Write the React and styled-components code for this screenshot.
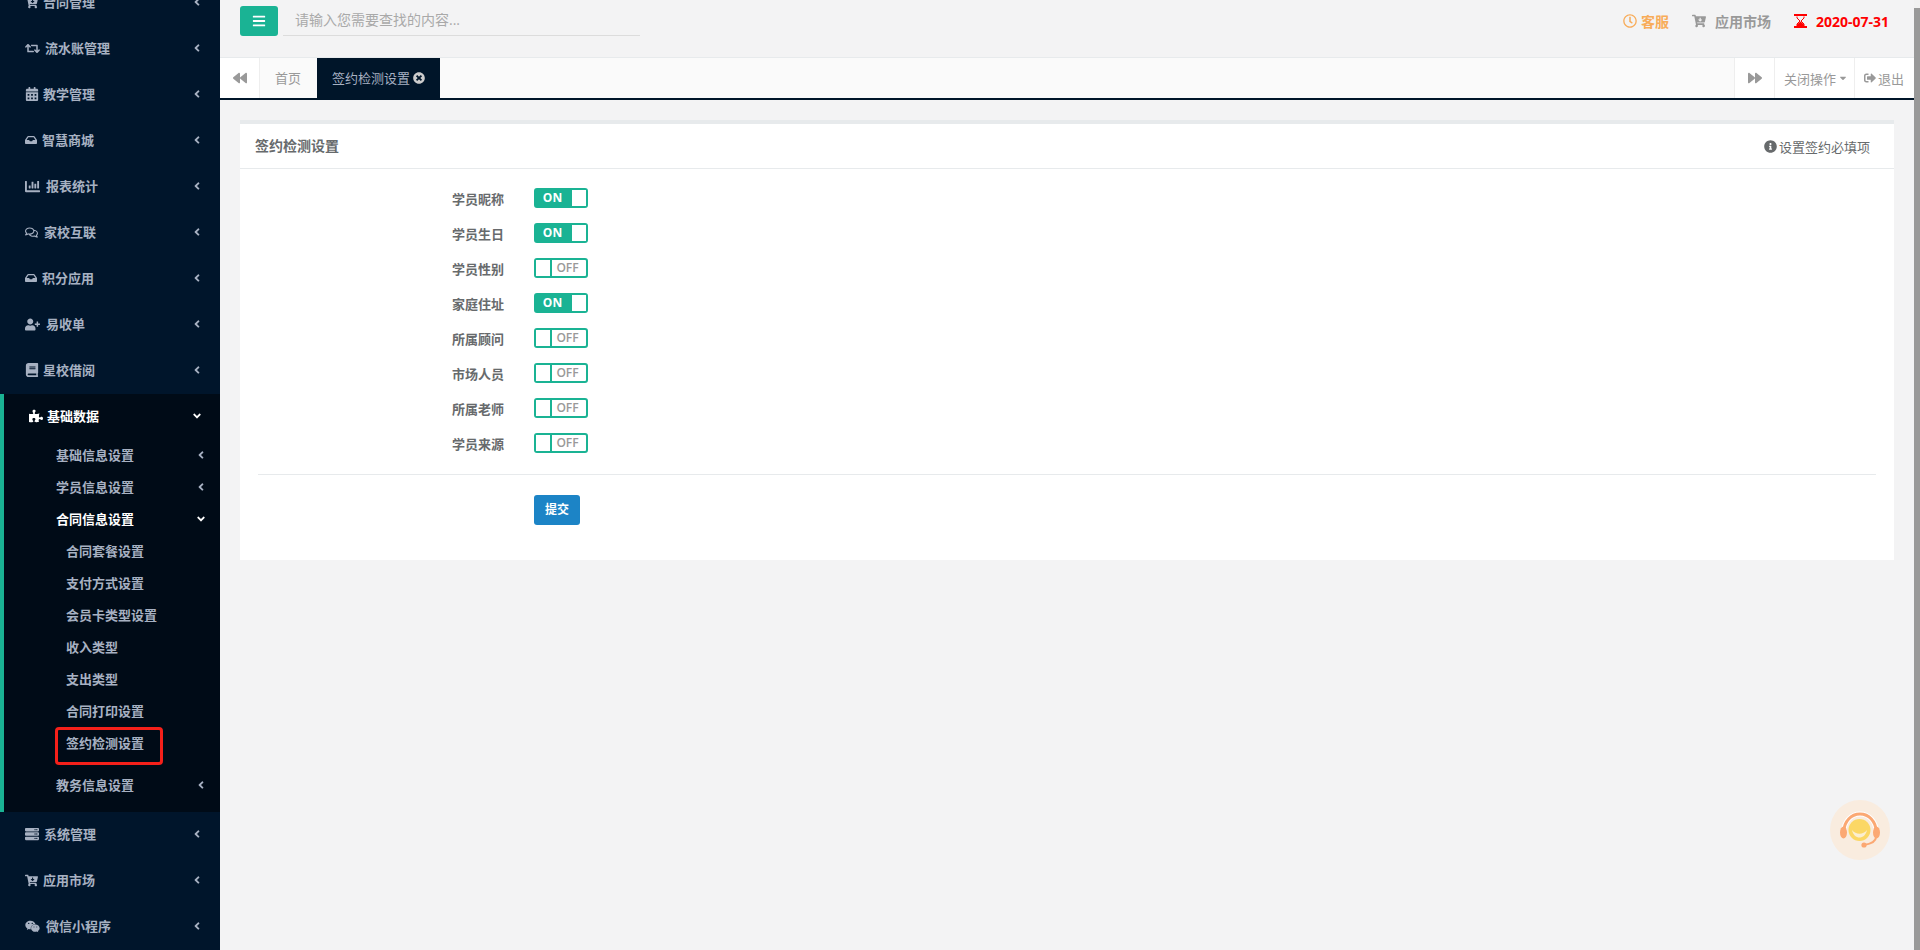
import React from 'react';
import styled, { createGlobalStyle } from 'styled-components';
import {
  FaAngleLeft, FaAngleDown, FaBars, FaBackward, FaForward, FaBook, FaCalendarAlt, FaChartBar, FaInbox,
  FaInfoCircle, FaPuzzlePiece, FaRegClock, FaRegComments, FaRetweet, FaServer, FaCartArrowDown,
  FaSignOutAlt, FaTimesCircle, FaUserPlus, FaWeixin, FaCaretDown,
} from 'react-icons/fa';

const FONT = `"Open Sans", "Noto Sans CJK SC", "Noto Sans", sans-serif`;

const Global = createGlobalStyle`
  html, body { margin: 0; padding: 0; height: 100%; overflow: hidden; background: #f3f3f4; }
  body { font-family: ${FONT}; font-size: 13px; color: #676a6c; }
  * { box-sizing: border-box; }
`;

const Page = styled.div`display: flex; width: 1920px; height: 950px; overflow: hidden;`;
const Sidebar = styled.nav`width: 220px; flex: none; height: 950px; overflow: hidden; background: #00152b;`;
const SideList = styled.div`margin-top: -20px; display: flex; flex-direction: column;`;

const TopItem = styled.div`
  height: 46px; display: flex; align-items: center; padding: 0 19px 2px 25px;
  color: ${p => (p.$active ? '#fff' : '#a7b1c2')}; font-weight: 700; line-height: 18px;
`;
const ItemIcon = styled.span`
  width: ${p => p.$w}px; flex: none; display: flex; align-items: center; font-size: ${p => p.$size}px;
`;
const ItemText = styled.span`flex: 1; white-space: nowrap;`;
const Chevron = styled.span`display: flex; font-size: 12px; width: 8px; justify-content: flex-end; color: inherit;`;

const ActiveGroup = styled.div`
  background: #000b17; border-left: 4px solid #1ab394; padding-bottom: 10px;
  display: flex; flex-direction: column;
`;
const SubItem = styled.div`
  height: 32px; display: flex; align-items: center; padding: 0 15px 2px 52px; font-weight: 700; line-height: 18px;
  color: ${p => (p.$open ? '#fff' : '#a7b1c2')};
`;
const ThirdList = styled.div`display: flex; flex-direction: column; padding-bottom: 10px;`;
const ThirdItem = styled.div`
  position: relative; height: 32px; display: flex; align-items: center; padding: 0 0 2px 62px;
  color: #a7b1c2; font-weight: 700; line-height: 18px;
`;
const Marker = styled.span`
  position: absolute; left: 51px; top: -1px; width: 108px; height: 38px;
  border: 3px solid #f5201a; border-radius: 4px;
`;

const Main = styled.main`flex: 1; min-width: 0; display: flex; flex-direction: column; background: #f3f3f4;`;
const TopBar = styled.header`height: 57px; padding: 6px 25px 0 20px; display: flex; align-items: flex-start;`;
const MenuButton = styled.button`
  width: 38px; height: 30px; border: 0; border-radius: 3px; background: #1ab394; color: #fff;
  display: flex; align-items: center; justify-content: center; font-size: 14px; padding: 0;
`;
const SearchBox = styled.div`
  width: 357px; height: 30px; margin-left: 5px; padding-left: 12px; border-bottom: 1px solid #dcdcdc;
  color: #a9a9a9; line-height: 28px; font-size: 14px;
`;
const TopRight = styled.div`margin-left: auto; display: flex; align-items: center; height: 30px; font-weight: 700; font-size: 14px;`;
const TopLink = styled.span`
  display: flex; align-items: center; color: ${p => p.$color}; margin-left: ${p => p.$ml}px; white-space: nowrap;
`;
const TopIcon = styled.span`display: flex; width: ${p => p.$w}px; font-size: ${p => p.$size || 14}px;`;

const TabBar = styled.div`
  height: 43px; background: #fafafa; border-top: 1px solid #e7eaec; border-bottom: 2px solid #001529; display: flex;
`;
const TabArrow = styled.div`
  width: ${p => p.$w}px; flex: none; background: #fff; color: #999; display: flex; align-items: center; justify-content: center;
  font-size: 14px; ${p => (p.$left ? 'border-right: 1px solid #eee;' : 'border-left: 1px solid #eee;')}
`;
const Tab = styled.div`
  height: 100%; padding: 0 ${p => (p.$active ? 15 : 16)}px 0 15px; display: flex; align-items: center; gap: 3px; white-space: nowrap; line-height: 18px;
  color: ${p => (p.$active ? '#a7b1c2' : '#999')}; background: ${p => (p.$active ? '#001529' : 'transparent')};
`;
const CloseIcon = styled.span`display: flex; font-size: 12px; color: #ccc;`;
const Spacer = styled.div`flex: 1;`;
const TabAction = styled.div`
  width: ${p => p.$w}px; flex: none; background: #fff; border-left: 1px solid #eee; color: #999;
  display: flex; align-items: center; padding-left: ${p => p.$pl}px; gap: 2px; white-space: nowrap;
`;

const Content = styled.div`padding: 20px 20px 0;`;
const Panel = styled.section`background: #fff; border-top: 4px solid #e7eaec; height: 440px;`;
const PanelHead = styled.div`
  height: 45px; border-bottom: 1px solid #e7eaec; padding: 0 24px 0 15px; display: flex; align-items: center; justify-content: space-between;
`;
const PanelTitle = styled.h5`margin: 0; font-size: 14px; font-weight: 700; color: #676a6c; line-height: 18px;`;
const PanelHint = styled.span`display: flex; align-items: center; gap: 2px; color: #676a6c; font-size: 13px;`;
const PanelBody = styled.div`padding: 19px 15px 0;`;
const FormRow = styled.div`height: 35px; display: flex; align-items: flex-start;`;
const Label = styled.label`
  width: 249px; text-align: right; font-weight: 700; line-height: 18px; padding-top: 2px; color: #676a6c;
`;
const Toggle = styled.div`
  margin-left: 30px; width: 54px; height: 20px; border: 2px solid #1ab394; border-radius: 3px; display: flex;
  align-items: center; font-size: 12px; line-height: 16px;
  font-weight: ${p => (p.$on ? 700 : 600)};
  flex-direction: ${p => (p.$on ? 'row' : 'row-reverse')}; background: ${p => (p.$on ? '#1ab394' : '#fff')};
  color: ${p => (p.$on ? '#fff' : '#999')};
`;
const ToggleText = styled.span`flex: 1; text-align: center; padding-right: 3px; padding-bottom: 1px;`;
const Knob = styled.span`
  width: 14px; height: 16px; background: #fff; flex: none; ${p => (p.$on ? '' : 'border-right: 2px solid #1ab394; width: 16px;')}
`;
const Divider = styled.hr`border: 0; border-top: 1px solid #e7eaec; margin: 6px 3px 20px;`;
const FormActions = styled.div`padding-left: 279px;`;
const Submit = styled.button`
  width: 46px; height: 30px; border: 0; border-radius: 3px; padding: 0; background: #1c84c6; color: #fff;
  font-family: ${FONT}; font-size: 12px; font-weight: 600; line-height: 16px;
`;

const Scrollbar = styled.div`width: 6px; flex: none; background: #f1f1f1; padding-top: 8px;`;
const Thumb = styled.div`height: 100%; background: #999;`;
const Support = styled.div`position: fixed; left: 1830px; top: 800px; width: 60px; height: 60px;`;

const top1 = [
  ['合同管理', <FaCartArrowDown />, 18, 13],
  ['流水账管理', <FaRetweet />, 20, 15],
  ['教学管理', <FaCalendarAlt />, 18, 14],
  ['智慧商城', <FaInbox />, 17, 12],
  ['报表统计', <FaChartBar />, 21, 15],
  ['家校互联', <FaRegComments />, 19, 13],
  ['积分应用', <FaInbox />, 17, 12],
  ['易收单', <FaUserPlus />, 21, 15],
  ['星校借阅', <FaBook />, 18, 14],
];
const top2 = [
  ['系统管理', <FaServer />, 19, 14],
  ['应用市场', <FaCartArrowDown />, 18, 13],
  ['微信小程序', <FaWeixin />, 21, 15],
];
const third = ['合同套餐设置', '支付方式设置', '会员卡类型设置', '收入类型', '支出类型', '合同打印设置', '签约检测设置'];
const fields = [
  ['学员昵称', true], ['学员生日', true], ['学员性别', false], ['家庭住址', true],
  ['所属顾问', false], ['市场人员', false], ['所属老师', false], ['学员来源', false],
];

const Top = ({ row }) => (
  <TopItem>
    <ItemIcon $w={row[2]} $size={row[3]}>{row[1]}</ItemIcon>
    <ItemText>{row[0]}</ItemText>
    <Chevron><FaAngleLeft /></Chevron>
  </TopItem>
);

const Hourglass = () => (
  <svg viewBox="0 0 13 14" width="13" height="14" fill="currentColor">
    <rect x="0" y="0" width="13" height="2" />
    <path d="M3 2.5 V4 L6 7 L3 10 V12 H10 V10 L7 7 L10 4 V2.5" fill="none" stroke="currentColor" strokeWidth="1" />
    <path d="M6.5 7.5 L3 10.5 V12 H10 V10.5Z" />
    <rect x="0" y="12" width="13" height="2" />
  </svg>
);

export default function App() {
  return (
    <Page>
      <Global />
      <Sidebar>
        <SideList>
          {top1.map(r => <Top key={r[0]} row={r} />)}
          <ActiveGroup>
            <TopItem $active>
              <ItemIcon $w={18} $size={14}><FaPuzzlePiece /></ItemIcon>
              <ItemText>基础数据</ItemText>
              <Chevron><FaAngleDown /></Chevron>
            </TopItem>
            <SubItem><ItemText>基础信息设置</ItemText><Chevron><FaAngleLeft /></Chevron></SubItem>
            <SubItem><ItemText>学员信息设置</ItemText><Chevron><FaAngleLeft /></Chevron></SubItem>
            <SubItem $open><ItemText>合同信息设置</ItemText><Chevron><FaAngleDown /></Chevron></SubItem>
            <ThirdList>
              {third.map((t, i) => (
                <ThirdItem key={t}>
                  {t}
                  {i === third.length - 1 && <Marker />}
                </ThirdItem>
              ))}
            </ThirdList>
            <SubItem><ItemText>教务信息设置</ItemText><Chevron><FaAngleLeft /></Chevron></SubItem>
          </ActiveGroup>
          {top2.map(r => <Top key={r[0]} row={r} />)}
        </SideList>
      </Sidebar>

      <Main>
        <TopBar>
          <MenuButton><FaBars /></MenuButton>
          <SearchBox>请输入您需要查找的内容...</SearchBox>
          <TopRight>
            <TopLink $color="#f8ac59"><TopIcon $w={18}><FaRegClock /></TopIcon>客服</TopLink>
            <TopLink $color="#999" $ml={23}><TopIcon $w={23}><FaCartArrowDown /></TopIcon>应用市场</TopLink>
            <TopLink $color="#ff0000" $ml={23}><TopIcon $w={22}><Hourglass /></TopIcon>2020-07-31</TopLink>
          </TopRight>
        </TopBar>
        <TabBar>
          <TabArrow $left $w={40}><FaBackward /></TabArrow>
          <Tab>首页</Tab>
          <Tab $active>签约检测设置<CloseIcon><FaTimesCircle /></CloseIcon></Tab>
          <Spacer />
          <TabArrow $w={40}><FaForward /></TabArrow>
          <TabAction $w={80} $pl={9}>关闭操作<FaCaretDown size={10} /></TabAction>
          <TabAction $w={60} $pl={9}><FaSignOutAlt size={12} />退出</TabAction>
        </TabBar>
        <Content>
          <Panel>
            <PanelHead>
              <PanelTitle>签约检测设置</PanelTitle>
              <PanelHint><FaInfoCircle size={13} />设置签约必填项</PanelHint>
            </PanelHead>
            <PanelBody>
              {fields.map(([name, on]) => (
                <FormRow key={name}>
                  <Label>{name}</Label>
                  <Toggle $on={on}>
                    <ToggleText>{on ? 'ON' : 'OFF'}</ToggleText>
                    <Knob $on={on} />
                  </Toggle>
                </FormRow>
              ))}
              <Divider />
              <FormActions><Submit>提交</Submit></FormActions>
            </PanelBody>
          </Panel>
        </Content>
      </Main>
      <Scrollbar><Thumb /></Scrollbar>

      <Support>
        <svg viewBox="0 0 60 60" width="60" height="60">
          <circle cx="30" cy="30" r="30" fill="#f9ecdf" />
          <path d="M14 31 A16 17 0 0 1 46 31" fill="none" stroke="#fff" strokeWidth="5" />
          <path d="M14 31 A16 17 0 0 1 46 31" fill="none" stroke="#fba873" strokeWidth="3" />
          <circle cx="29.5" cy="30" r="11" fill="#fbd765" />
          <path d="M22 30 C24 40 35 40 37 30 C33 35 26 35 22 30Z" fill="#fbeed0" />
          <ellipse cx="13.5" cy="32.5" rx="3.5" ry="6" fill="#fba873" />
          <ellipse cx="46.5" cy="32.5" rx="3.5" ry="6" fill="#fba873" />
          <path d="M46 37 C46 42 40 44 34 45" fill="none" stroke="#fba873" strokeWidth="2" />
          <circle cx="34" cy="45" r="2.6" fill="#fba873" />
        </svg>
      </Support>
    </Page>
  );
}
